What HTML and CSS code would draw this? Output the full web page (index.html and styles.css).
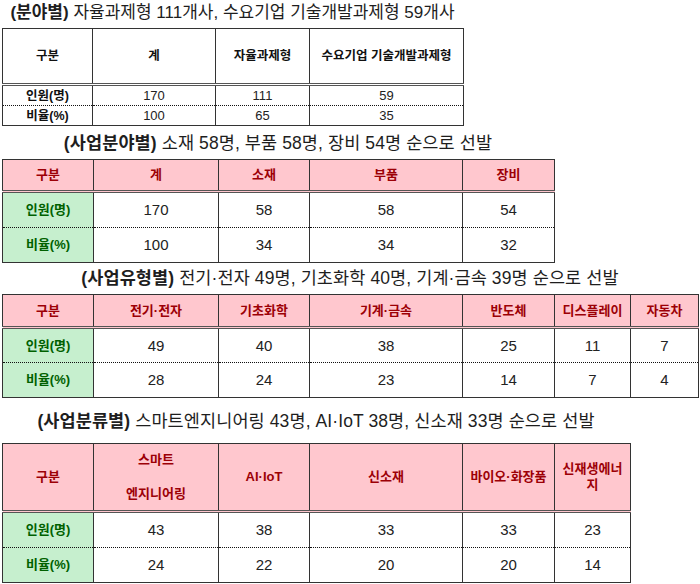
FILE: index.html
```html
<!DOCTYPE html>
<html lang="ko">
<head>
<meta charset="utf-8">
<title>분야별 선발 현황</title>
<link rel="stylesheet" href="styles.css">
</head>
<body>
<section class="block b1">
  <div class="title t1"><b>(분야별)</b> 자율과제형 111개사, 수요기업 기술개발과제형 59개사</div>
  <table class="tbl plain">
    <colgroup><col class="c1a"><col class="c1b"><col class="c1c"><col class="c1d"></colgroup>
    <thead>
      <tr class="hrow h56"><th>구분</th><th>계</th><th>자율과제형</th><th>수요기업 기술개발과제형</th></tr>
    </thead>
    <tbody>
      <tr class="r1 r20"><th>인원(명)</th><td>170</td><td>111</td><td>59</td></tr>
      <tr class="r2 r20"><th>비율(%)</th><td>100</td><td>65</td><td>35</td></tr>
    </tbody>
  </table>
</section>

<section class="block b2">
  <div class="title t2"><b>(사업분야별)</b> 소재 58명, 부품 58명, 장비 54명 순으로 선발</div>
  <table class="tbl color">
    <colgroup><col class="ca"><col class="cb"><col class="cc"><col class="cd"><col class="ce"></colgroup>
    <thead>
      <tr class="hrow h33"><th>구분</th><th>계</th><th>소재</th><th>부품</th><th>장비</th></tr>
    </thead>
    <tbody>
      <tr class="r1 r35"><th>인원(명)</th><td>170</td><td>58</td><td>58</td><td>54</td></tr>
      <tr class="r2 r35"><th>비율(%)</th><td>100</td><td>34</td><td>34</td><td>32</td></tr>
    </tbody>
  </table>
</section>

<section class="block b3">
  <div class="title t3"><b>(사업유형별)</b> 전기·전자 49명, 기초화학 40명, 기계·금속 39명 순으로 선발</div>
  <table class="tbl color">
    <colgroup><col class="ca"><col class="cb"><col class="cc"><col class="cd"><col class="ce"><col class="cf"><col class="cg"></colgroup>
    <thead>
      <tr class="hrow h34"><th>구분</th><th>전기·전자</th><th>기초화학</th><th>기계·금속</th><th>반도체</th><th>디스플레이</th><th>자동차</th></tr>
    </thead>
    <tbody>
      <tr class="r1 r34"><th>인원(명)</th><td>49</td><td>40</td><td>38</td><td>25</td><td>11</td><td>7</td></tr>
      <tr class="r2 r35"><th>비율(%)</th><td>28</td><td>24</td><td>23</td><td>14</td><td>7</td><td>4</td></tr>
    </tbody>
  </table>
</section>

<section class="block b4">
  <div class="title t4"><b>(사업분류별)</b> 스마트엔지니어링 43명, AI·IoT 38명, 신소재 33명 순으로 선발</div>
  <table class="tbl color">
    <colgroup><col class="ca"><col class="cb"><col class="cc"><col class="cd"><col class="ce"><col class="cf"></colgroup>
    <thead>
      <tr class="hrow h69"><th>구분</th><th><span class="ln">스마트</span><span class="ln gap">엔지니어링</span></th><th>AI·IoT</th><th>신소재</th><th>바이오·화장품</th><th class="wrap"><span class="ln">신재생에너</span><span class="ln">지</span></th></tr>
    </thead>
    <tbody>
      <tr class="r1 r35"><th>인원(명)</th><td>43</td><td>38</td><td>33</td><td>33</td><td>23</td></tr>
      <tr class="r2 r35"><th>비율(%)</th><td>24</td><td>22</td><td>20</td><td>20</td><td>14</td></tr>
    </tbody>
  </table>
</section>
</body>
</html>
```

FILE: styles.css
```css
html, body {
  margin: 0;
  padding: 0;
  background: #ffffff;
}

body {
  font-family: "Liberation Sans", "Noto Sans CJK KR", sans-serif;
  color: #1e1e1e;
}

.block {
  margin-left: 2px;
}

.b1 { width: 461px; }
.b2 { width: 552px; }
.b3 { width: 696px; }
.b4 { width: 628px; }

.title {
  text-align: center;
  white-space: nowrap;
  line-height: 22px;
  font-size: 17.5px;
  letter-spacing: 0.1px;
}

.title b { font-weight: 700; }

.t1 { font-size: 17px; letter-spacing: 0; margin: 2px 0 4px; }
.t2 { margin: 6px 0 5px; }
.t3 { margin: 4px 0 5px; }
.t4 { margin: 12px 0 11px; }

.tbl {
  border-collapse: collapse;
  table-layout: fixed;
  width: 100%;
  border: 1px solid #333;
}

.tbl th, .tbl td {
  border-left: 1px solid #333;
  border-right: 1px solid #333;
  text-align: center;
  vertical-align: middle;
  padding: 0 1px;
  line-height: 16px;
}

.tbl td { font-weight: 400; }

.hrow th {
  border-top: 1px solid #333;
  border-bottom: 3px double #555;
}

.r1 th, .r1 td { border-bottom: 1px dotted #111; }
.r2 th, .r2 td { border-bottom: 1px solid #333; }

/* plain table */
.plain th { font-size: 12.5px; font-weight: 700; color: #111; }
.plain td { font-size: 13px; color: #222; }

.c1a { width: 90px; }
.c1b { width: 123px; }
.c1c { width: 94px; }
.c1d { width: 154px; }

.h56 th { height: 54px; }
.r20 th, .r20 td { height: 19px; }

/* coloured tables */
.color th { font-size: 13px; font-weight: 700; }
.color .hrow th { background: #ffc7ce; color: #9c0006; }
.color tbody th { background: #c6efce; color: #006100; }
.color td { font-size: 15px; color: #222; background: #fff; }

.ca { width: 91px; }
.cb { width: 125px; }
.cc { width: 91px; }
.cd { width: 153px; }
.ce { width: 92px; }
.cf { width: 76px; }
.cg { width: 68px; }

.h33 th { height: 30px; }
.h34 th { height: 31px; }
.h69 th { height: 66px; }
.r34 th, .r34 td { height: 33px; }
.r35 th, .r35 td { height: 34px; }

.ln { display: block; }
.ln.gap { margin-top: 18px; }

.wrap { line-height: 13px; padding: 0; }
```
